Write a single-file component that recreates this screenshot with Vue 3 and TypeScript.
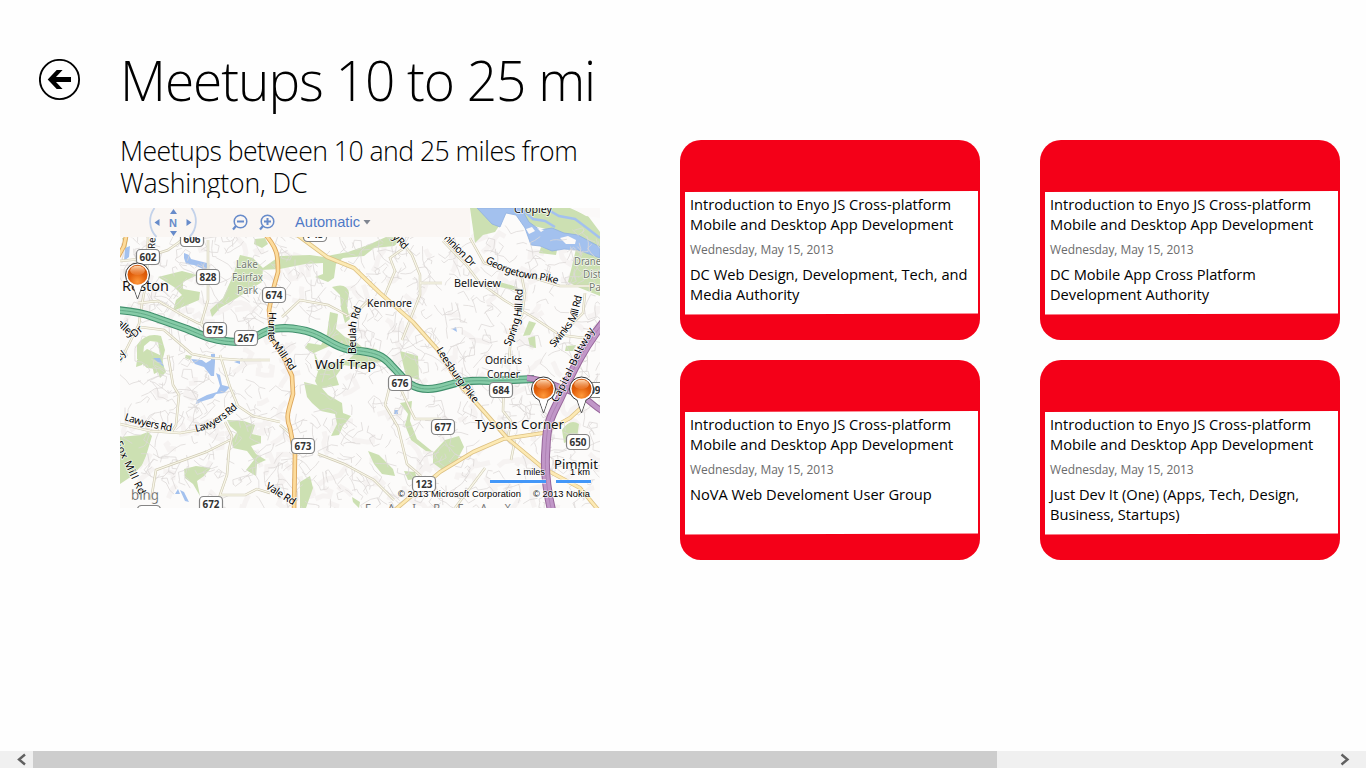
<script setup lang="ts">
interface Meetup { title: string[]; date: string; group: string[] }
interface Shield { x: number; y: number; n: string }
interface Label { x: number; y: number; t: string; w: number; s: number; r?: number; c?: string }
interface Curve { id: string; d: string; t: string; w: number }

const title = ['Introduction to Enyo JS Cross-platform', 'Mobile and Desktop App Development']
const date = 'Wednesday, May 15, 2013'
const meetups: Meetup[] = [
  { title, date, group: ['DC Web Design, Development, Tech, and', 'Media Authority'] },
  { title, date, group: ['DC Mobile App Cross Platform', 'Development Authority'] },
  { title, date, group: ['NoVA Web Develoment User Group'] },
  { title, date, group: ['Just Dev It (One) (Apps, Tech, Design,', 'Business, Startups)'] },
]

const shields: Shield[] = [
  { x: 192, y: 239, n: '606' }, { x: 148, y: 257, n: '602' }, { x: 208, y: 277, n: '828' },
  { x: 274, y: 295, n: '674' }, { x: 215, y: 330, n: '675' }, { x: 246, y: 338, n: '267' },
  { x: 400, y: 383, n: '676' }, { x: 303, y: 446, n: '673' }, { x: 501, y: 390, n: '684' },
  { x: 443, y: 427, n: '677' }, { x: 578, y: 442, n: '650' }, { x: 424, y: 484, n: '123' },
  { x: 211, y: 504, n: '672' }, { x: 315, y: 234, n: '743' }, { x: 592, y: 390, n: '309' },
  { x: 149, y: 513, n: '608' },
]

const park = '#747c70'
const labels: Label[] = [
  { x: 122, y: 291, t: 'Reston', w: 47, s: 14 },
  { x: 315, y: 369, t: 'Wolf Trap', w: 61, s: 13 },
  { x: 367, y: 307, t: 'Kenmore', w: 45, s: 11 },
  { x: 454, y: 287, t: 'Belleview', w: 47, s: 11 },
  { x: 514, y: 213, t: 'Cropley', w: 38, s: 11 },
  { x: 485, y: 364, t: 'Odricks', w: 37, s: 10.5 },
  { x: 487, y: 378, t: 'Corner', w: 33, s: 10.5 },
  { x: 475, y: 429, t: 'Tysons Corner', w: 89, s: 13 },
  { x: 554, y: 469, t: 'Pimmit', w: 44, s: 13 },
  { x: 236, y: 268, t: 'Lake', w: 22, s: 11, c: park },
  { x: 232, y: 281, t: 'Fairfax', w: 31, s: 11, c: park },
  { x: 237, y: 294, t: 'Park', w: 21, s: 11, c: park },
  { x: 574, y: 265, t: 'Drane', w: 27, s: 11, c: park },
  { x: 583, y: 278, t: 'Dist', w: 18, s: 11, c: park },
  { x: 589, y: 291, t: 'Pa', w: 12, s: 11, c: park },
  { x: 155, y: 249, t: 'Res', w: 16, s: 10, r: -88 },
]

const curves: Curve[] = [
  { id: 'hunter', d: 'M269 312 L268 335 Q269 343 276 350 L294 376', t: 'Hunter Mill Rd', w: 66 },
  { id: 'beulah', d: 'M356 354 L356 326 Q358 316 364 303', t: 'Beulah Rd', w: 47 },
  { id: 'yrd', d: 'M392 238 L410 256', t: 'y Rd', w: 17 },
  { id: 'dominion', d: 'M441 236 L478 274', t: 'minion Dr', w: 44 },
  { id: 'george', d: 'M485 262 Q507 276 532 279 T560 286', t: 'Georgetown Pike', w: 76 },
  { id: 'spring', d: 'M510 347 Q520 325 522 310 L523 286', t: 'Spring Hill Rd', w: 60 },
  { id: 'swinks', d: 'M554 348 Q573 326 577 317 L583 293', t: 'Swinks Mill Rd', w: 60 },
  { id: 'lees', d: 'M436 350 Q452 376 476 406', t: 'Leesburg Pike', w: 66 },
  { id: 'capital', d: 'M557 403 Q570 379 582 352 L597 326', t: 'Capital Beltway', w: 82 },
  { id: 'law1', d: 'M124 420 Q145 427 175 432', t: 'Lawyers Rd', w: 49 },
  { id: 'law2', d: 'M196 432 Q217 428 240 406', t: 'Lawyers Rd', w: 49 },
  { id: 'fox', d: 'M115 443 Q125 466 142 500', t: 'Fox Mill Rd', w: 58 },
  { id: 'vale', d: 'M265 488 L294 506', t: 'Vale Rd', w: 33 },
  { id: 'valley', d: 'M116 324 L130 337 Q134 339 138 335 L146 328', t: 'alley Dr', w: 35 },
  { id: 'ey', d: 'M120 362 L128 349', t: 'ey', w: 11 },
]

/* Quiet residential streets: short random walks from a seeded generator. */
let seed = 1913
const rnd = (): number => {
  seed = (seed * 16807) % 2147483647
  return seed / 2147483647
}
const streets = (count: number): string => {
  let d = ''
  for (let i = 0; i < count; i++) {
    let a = rnd() * 6.28
    d += `M${(118 + rnd() * 484).toFixed(1)} ${(230 + rnd() * 280).toFixed(1)}`
    const steps = 2 + Math.floor(rnd() * 4)
    for (let k = 0; k < steps; k++) {
      const l = 3 + rnd() * 6
      d += `l${(Math.cos(a) * l).toFixed(1)} ${(Math.sin(a) * l).toFixed(1)}`
      a += rnd() > 0.6 ? 1.4 : (rnd() - 0.5) * 1.2
    }
  }
  return d
}
const minor = streets(720)
const relief = streets(200)

const secondary = 'M120 261l20-2 28-9 10-7 8-7M148 237l-1 40-5 27-3 20-10 20-9 18M138 303l20-2 26 15 14 7 20 7M208 240v60l-7 24 6 8M140 327l24 3 28 24 20 4 28 2 30 0M168 355l5 30 6 10-3 30-5 8M220 355l10 32 8 19 15 10 27 6M120 424l30 7 30 2 30-5 22-16 5-9M225 422l7 14-3 14-2 25-7 20h25l12-6 13 4M230 440l-24 12-50 18-5 30M385 295l10-24-5-13 14-10-5-10M400 240l12 15 8 20v20l-10 25-8 20M420 283h22M282 317l18-17 28 5 19 10M346 317l13-7 10-10M470 238l14 25 24 8 13 3 39 12h40M443 241l24 25 12 16 25 18 30 18 26 17 24 3M521 273l4 20-3 22-11 20-2 26M585 293l-2 20-12 12-19 16M385 405l13 22 9 37 14 12M385 405l4-16 10-4 10 22 6 12h26M318 454l26 10 30 16 20 20M280 425l12 10M504 380l-1 31 8 10-4 20M515 440l-4 20M455 508l30-40'
const arterials = 'M127 232l-3 14-6 11M263 232c15 16 15 24 15 40l-5 18-4 20 3 28 12 20 8 18 1 18c-4 16-8 22-3 34l5 26-1 58'
const pikes = 'M296 234l31 23 27 11 26 25 33 29 24 27 23 36 27 30 20 23 36 30 37 20 20 24M390 514l50-42 33-20 30-13 40-6 27-15 12-11'
const highway = 'M116 310 C130 311 143 313 153 317 L187 329 C202 335 212 341 237 342 C258 342 258 328 285 328 C325 330 325 345 350 350 C378 352 384 357 391 365 C404 378 409 389 428 389 C450 388 451 379 490 381 L534 379'
const beltway = 'M552 512 C547 492 544 470 546 448 C547 418 553 414 562 394 C572 372 583 348 604 322'
const spur = 'M527 378 C544 379 560 388 575 393 C588 397 592 406 604 412'
const pins = [{ x: 137.5, y: 275 }, { x: 543.5, y: 389 }, { x: 581.5, y: 389 }]
</script>

<template>
  <main class="page">
    <header class="top">
      <svg class="back" viewBox="0 0 42 42" aria-label="Back">
        <circle cx="20.5" cy="20.5" r="19.6" fill="none" stroke="#000" stroke-width="1.9" />
        <path d="M8.7 20.4 17.7 11H23.6L17 18H32v5H17l6.6 7H17.7Z" fill="#000" />
      </svg>
      <h1>Meetups 10 to 25 mi</h1>
    </header>

    <div class="content">
      <section class="intro">
        <h2><span class="first">Meetups between 10 and 25 miles from</span><br /><span class="second">Washington, DC</span></h2>
        <svg class="map" viewBox="120 208 480 300">
          <defs>
            <radialGradient id="orange" cx=".5" cy=".85" r=".8">
              <stop offset="0" stop-color="#ff9a3c" /><stop offset=".55" stop-color="#e2600c" /><stop offset="1" stop-color="#cf4f00" />
            </radialGradient>
            <linearGradient id="gloss" x1="0" y1="0" x2="0" y2="1">
              <stop offset="0" stop-color="#ffd9b4" /><stop offset="1" stop-color="#f08a45" stop-opacity=".4" />
            </linearGradient>
            <path v-for="c in curves" :id="c.id" :key="c.id" :d="c.d" />
          </defs>
          <rect x="120" y="208" width="480" height="300" fill="#fcfbfa" />
          <path :d="relief" fill="none" stroke="#f6f3f2" stroke-width="5" />

          <g fill="#cce0b2">
            <path d="M240 255l13 3 10 10-1 14-25 16-17 10-8 9-2-7 13-12 9-20z" />
            <path d="M158 277l24-6 15 4-14 7 0 7 17 3-1 8-26 11 3-11 6-5-8-8z" />
            <path fill-rule="evenodd" d="M137 345q9-13 24-9l4 14-3 12 4 10-6 6-3-9-10-1-10-9zM144 346l-1 10 9 6 8-7-2-13-8-1z" />
            <path d="M280 256l30-1 14 2 8-2 16-3 20-7 18-8 18 1-10 8-20 2-10 8-21 2-7 6-2 14-6 4-13-5 8-3 0-11-18 1-25 5-20 1z" />
            <path d="M332 287q15-5 17 6l-2 14 3 12-5 4-4-15-1-13z" />
            <path d="M330 312l8 2-2 15 9 8 10 4 7 6-10 4-20-6-18 8 3 18 14-8 17-3 14-13 14 2 6 5 7 7-15 2-13 5-17-3-8 11 3 9-20 4-4-8 5-16-5-11-10-6 3-5 13 2 6-11z" />
            <path d="M304 382l16 4 8 9 14 8 1 10 8 3-8 10-4 9-8 1 6-12-2-10-14-3-9-8-5-6z" />
            <path d="M400 351l18 5 1 24-13-4-3-12z" />
            <path d="M400 403l12-2-2 20 7 18 16 13-7-1-15-11-6-15 3-11z" />
            <path d="M433 453l12-13 14-4 5 11-8 15-12 9-11-8z" />
            <path d="M368 451l11 4 14 14 2 7-13-2-8-10zM404 471l11 1 2 7-9 1z" />
            <path d="M227 420l17 1 11 4-3 9 9 2 0 7-10 3 5 8 10 6-9 4-1 12-10-6 8-10-7-9-14-3-1-8 5-8-7-6z" />
            <path d="M120 437l20-2 8-3 4 4-6 20-4 9-10 11-12 8z" />
            <path d="M184 469l12-3 15 2-7 8-7 5 3 15-7-12-8-6z" />
            <path d="M140 355l7-6 15 7 2 13-10 5-2-9-8-2zM137 360l8-2-3 7-6 2zM186 355l6 1-2 4-5-2z" />
            <path d="M300 482l10-6 3 12-7 20h-6zM352 497l8 5-1 6-6-6z" />
            <path d="M255 239l10-1 3 6-6 4-8-4z" />
            <path d="M576 249l24 5v42l-20-8-12-6 4-16z" />
            <path d="M541 247l16 3-1 5-17-2zM500 282l17 5 1 4-18-4zM529 321l7 2-6 12-7 1zM528 338l7-2 1 12-6-1zM566 346l10-1-2 4 5 2-14 0z" />
            <path d="M562 430q8-12 17-6l-2 14-13 5zM122 238h6l-2 13z" />
            <path d="M470 208h9l20 18-4 6-12 3-8 8z" />
            <path d="M518 208h52l18 8 12 16v18l-26-12-24-8-24-6-8-12z" />
          </g>

          <path d="M477 208h44l8 14 11 8 12-2 12 5 14 2 22 12v11l-22-8-14-1-12 2-12-5-9-1-6-17-9-13-10-2-6 14-8-3z" fill="#a3c1ee" stroke="#8fb0e0" stroke-width=".8" />
          <g fill="#a3c1ee">
            <path d="M184 253l5 2 2 4 16 4 2 6-6 0-9-4-8-1-2-6zM125 248l5-2-1 11-5 4z" />
            <path d="M191 359l11 1 4 3 5-3 0-6h4v8l-1 14-3 0-7-9-9-3z" />
            <path d="M216 373l4 2 2 10 8 2-6 6-8 1-3 4-10 3-7 3 1-4 10-5 10-3 3-6-2-7z" />
            <path d="M175 494l3-5 2 5zM180 490l4 2 5 10-4-1zM153 358h7l4 9-5-4zM234 362l6-2v4zM394 410h4v4h-4zM452 329l4-2 1 5z" />
          </g>
          <path d="M526 229l6-2 3 4-6 3zM537 228l7 2-3 2zM560 238l8-2 8 4-1 4-9 0z" fill="#fbf9f8" />
          <path d="M545 208l14 8 16 3 12 9 13 10M523 210l10 9 12 2 10 6" fill="none" stroke="#a3c1ee" stroke-width="2.4" />
          <path d="M572 208l14 8 14 2v-10z" fill="#fbf9f8" />

          <path :d="minor" fill="none" stroke="#dcd8d7" stroke-width=".75" />
          <path :d="secondary" fill="none" stroke="#cfcab4" stroke-width="2.5" />
          <path :d="secondary" fill="none" stroke="#f8f6e8" stroke-width="1.3" />

          <g fill="none" stroke-linejoin="round">
            <path :d="arterials" stroke="#dba55c" stroke-width="4.6" />
            <path :d="arterials" stroke="#fddc9c" stroke-width="2.8" />
            <path :d="pikes" stroke="#dcc083" stroke-width="4.2" />
            <path :d="pikes" stroke="#fdeab4" stroke-width="2.6" />
            <path :d="highway" stroke="#418f6c" stroke-width="8" />
            <path :d="highway" stroke="#86cba7" stroke-width="5.8" />
            <path :d="highway" stroke="#64ac89" stroke-width="1" />
            <path d="M556 388L590 395" stroke="#67ae8b" stroke-width="5" />
            <path :d="spur" stroke="#97669a" stroke-width="6.4" />
            <path :d="spur" stroke="#c197c8" stroke-width="4.4" />
            <path :d="beltway" stroke="#97669a" stroke-width="9" />
            <path :d="beltway" stroke="#c197c8" stroke-width="7" />
            <path :d="beltway" stroke="#aa7db0" stroke-width=".8" />
          </g>

          <g class="halo">
            <text v-for="c in curves" :key="c.id" font-size="10.3"><textPath :href="'#' + c.id" :textLength="c.w">{{ c.t }}</textPath></text>
            <text v-for="l in labels" :key="l.t" :x="l.x" :y="l.y" :font-size="l.s" :fill="l.c || '#111'" :textLength="l.w" lengthAdjust="spacingAndGlyphs" :transform="l.r ? `rotate(${l.r} ${l.x} ${l.y})` : undefined">{{ l.t }}</text>
          </g>
          <g v-for="s in shields" :key="s.n">
            <rect :x="s.x - 11.5" :y="s.y - 7.5" width="23" height="15" rx="4" fill="#fff" stroke="#858585" stroke-width="1.2" />
            <text class="num" :x="s.x - 8.5" :y="s.y + 4" textLength="17" lengthAdjust="spacingAndGlyphs">{{ s.n }}</text>
          </g>

          <text x="365" y="512" class="county" textLength="146">FAIRFAX</text>

          <g v-for="p in pins" :key="p.x">
            <path :d="`M${p.x - 5.5} ${p.y + 8}L${p.x} ${p.y + 24}L${p.x + 5.5} ${p.y + 8}`" fill="#fff" stroke="#555" stroke-width="1" />
            <circle :cx="p.x" :cy="p.y" r="12" fill="#fff" stroke="#333" stroke-width="1" />
            <path :d="`M${p.x - 5} ${p.y + 8}L${p.x} ${p.y + 22.5}L${p.x + 5} ${p.y + 8}`" fill="#fff" />
            <circle :cx="p.x" :cy="p.y - .3" r="10" fill="url(#orange)" />
            <ellipse :cx="p.x" :cy="p.y - 4.6" rx="7.4" ry="4.6" fill="url(#gloss)" />
          </g>

          <rect x="120" y="208" width="350" height="29" fill="#faf6f3" />
          <path d="M154.500 208a22.500 22.500 0 0 0 2 29M191.500 208a22.500 22.500 0 0 1-2 29" fill="none" stroke="#c3d2ea" stroke-width="1.8" />
          <g fill="#678bca">
            <path d="M173.500 209l3.500 5h-7zM173.500 236l3.500-5h-7zM154.500 222.500l5-3.500v7zM191.500 222.500l-5-3.500v7z" />
            <text x="169" y="227" class="tool bold" textLength="8" lengthAdjust="spacingAndGlyphs">N</text>
          </g>
          <g fill="none" stroke="#678bca" stroke-width="1.5">
            <circle cx="240.500" cy="221.500" r="6.300" /><path d="M237 221.500h7" stroke-width="2" /><path d="M236 226l-3 3.500" stroke-width="2.200" />
            <circle cx="267.500" cy="221.500" r="6.300" /><path d="M264 221.500h7M267.500 218v7" stroke-width="2" /><path d="M263 226l-3 3.500" stroke-width="2.200" />
          </g>
          <text x="295" y="227" class="tool" fill="#4f79c7" textLength="65" lengthAdjust="spacingAndGlyphs">Automatic</text>
          <path d="M363.500 220h7l-3.500 4.500z" fill="#7f8590" />

          <text x="131" y="500" class="bing" textLength="28" lengthAdjust="spacingAndGlyphs">bing</text>
          <g class="legal">
            <text x="516" y="475" textLength="29">1 miles</text>
            <text x="570" y="475" textLength="20">1 km</text>
            <text x="398" y="497" textLength="123">© 2013 Microsoft Corporation</text>
            <text x="533" y="497" textLength="57">© 2013 Nokia</text>
          </g>
          <path d="M490 481.500h56M556 481.500h35" stroke="#fff" stroke-width="4" />
          <path d="M490 481.500h56M556 481.500h35" stroke="#4397f8" stroke-width="3" />
        </svg>
      </section>

      <section class="cards">
        <article v-for="(m, i) in meetups" :key="i" class="card">
          <div class="panel">
            <p><template v-for="t in m.title" :key="t">{{ t }}<br /></template></p>
            <p class="date">{{ m.date }}</p>
            <p><template v-for="t in m.group" :key="t">{{ t }}<br /></template></p>
          </div>
        </article>
      </section>
    </div>

    <footer class="scroll">
      <svg class="arrow" viewBox="0 0 33 17"><path d="M25 3.500L19 8.500l6 5" /></svg>
      <div class="thumb"></div>
      <svg class="arrow right" viewBox="0 0 33 17"><path d="M8.500 3.500l6 5-6 5" /></svg>
    </footer>
  </main>
</template>

<style>
body { background: #fefefe; overflow: hidden; }
</style>
<style scoped>
.page { height: 768px; display: flex; flex-direction: column; font-family: "Open Sans", "Noto Sans", sans-serif; color: #000; overflow: hidden; }
p, h1, h2 { margin: 0; }
.top { display: flex; height: 135px; padding: 59px 0 0 39px; box-sizing: border-box; }
.back { width: 42px; height: 42px; flex: none; }
h1 { height: 80px; margin: -20.500px 0 0 39px; font-size: 56px; line-height: 80px; font-weight: 300; letter-spacing: -1.09px; white-space: nowrap; transform: scaleX(.95); transform-origin: 0 50%; }
.content { display: flex; padding-left: 120px; flex: 1; }
.intro { width: 480px; flex: none; }
h2 { height: 63px; margin-bottom: 10px; font-size: 26.67px; line-height: 32px; font-weight: 300; white-space: nowrap; overflow: hidden; }
.first { letter-spacing: -.56px; }
.second { letter-spacing: -.19px; }
.map { display: block; width: 480px; height: 300px; }
.cards { display: grid; grid-template-columns: 300px 300px; grid-auto-rows: 200px; gap: 20px 60px; margin: 5px 0 0 80px; }
.card { background: #f40018; border-radius: 21px; padding: 51px 2px 0 5px; }
.panel { box-sizing: border-box; height: 124px; padding: 3px 5px; background: #fff; clip-path: polygon(0 1px, 100% 0, 100% 122.500px, 0 123.500px); font-size: 14.67px; line-height: 20px; letter-spacing: -.01px; white-space: nowrap; }
.date { margin: 6px 0 4px; font-size: 12px; letter-spacing: -.07px; color: #6b6b6b; }
.scroll { display: flex; height: 17px; flex: none; background: #f0f0f0; }
.arrow { width: 33px; height: 17px; flex: none; }
.right { margin-left: auto; }
.arrow path { fill: none; stroke: #606060; stroke-width: 2.4; }
.thumb { width: 964px; background: #cdcdcd; }
.halo text { font-family: "Noto Sans", "Open Sans", sans-serif; paint-order: stroke; stroke: #fffc; stroke-width: 1.6px; stroke-linejoin: round; }
.num { font: 700 10.500px "Noto Sans", sans-serif; fill: #333; }
.county { font: 11px "Noto Sans", sans-serif; fill: #777; }
.tool { font: 14.500px "Liberation Sans", sans-serif; }
.bold { font: 700 11px "Liberation Sans", sans-serif; }
.bing { font: 14px "Noto Sans", sans-serif; fill: #444; stroke: #fff; stroke-width: .3px; }
.legal { font: 9.300px "Liberation Sans", sans-serif; fill: #000; paint-order: stroke; stroke: #fffb; stroke-width: 1.500px; }
</style>
